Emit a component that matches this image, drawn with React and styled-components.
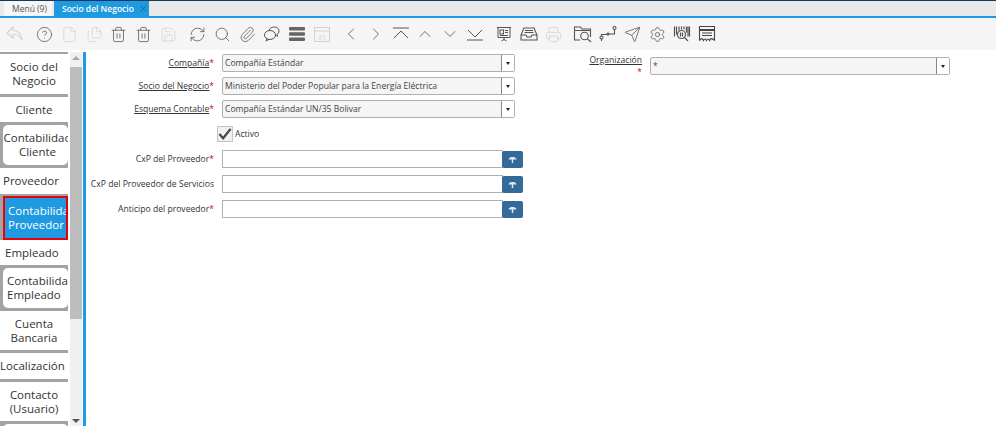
import styled, { createGlobalStyle } from "styled-components";
import {
  ChevronLeft,
  ChevronRight,
  ChevronUp,
  ChevronDown,
  CircleHelp,
  File,
  Files,
  Trash2,
  Save,
  RefreshCw,
  Search,
  Paperclip,
  Printer,
  Send,
  Settings,
  X,
} from "lucide-react";

const GlobalStyle = createGlobalStyle`
  html, body {
    margin: 0;
    height: 100%;
    overflow: hidden;
    background: #fff;
    font-family: "Open Sans", "Noto Sans", sans-serif;
  }
  * {
    box-sizing: border-box;
  }
`;

const Page = styled.div`
  width: 996px;
  height: 426px;
  display: flex;
  flex-direction: column;
  overflow: hidden;
`;

const TabBar = styled.div`
  height: 18px;
  flex: none;
  display: flex;
  align-items: flex-end;
  gap: 2px;
  padding-left: 4px;
  background: #e9e9e9;
  border-top: 1px solid #17375e;
  border-bottom: 2px solid #1f9ae0;
`;

const WindowTab = styled.div`
  height: 15px;
  display: flex;
  align-items: center;
  gap: 4px;
  padding: 0 0 0 ${(props) => (props.$active ? "8px" : "8px")};
  width: ${(props) => (props.$active ? "95px" : "48px")};
  font-size: 8.5px;
  font-weight: ${(props) => (props.$active ? 600 : 400)};
  color: ${(props) => (props.$active ? "#fff" : "#555")};
  background: ${(props) => (props.$active ? "#1f9ae0" : "#f6f6f6")};
`;

const Toolbar = styled.div`
  height: 32px;
  flex: none;
  display: flex;
  align-items: center;
  padding-left: 3px;
  gap: 4.4px;
  background: #f5f5f5;
`;

const ToolGroup = styled.div`
  display: flex;
  align-items: center;
`;

const ToolIcon = styled.span`
  width: 24.8px;
  height: 24px;
  display: flex;
  align-items: center;
  justify-content: center;
  color: ${(props) => (props.$off ? "#d2d2d2" : "#555")};
`;

const Body = styled.div`
  flex: 1;
  min-height: 0;
  display: flex;
  padding-top: 2px;
`;

const SideTabs = styled.div`
  width: 68px;
  flex: none;
  display: flex;
  flex-direction: column;
  overflow: hidden;
  background: #a3a3a3;
  padding-top: 2px;
`;

const SideTab = styled.div`
  flex: none;
  height: ${(props) => props.$h}px;
  margin-bottom: ${(props) => props.$gap ?? 3}px;
  margin-left: ${(props) => (props.$sub ? "3px" : "0")};
  padding: ${(props) => props.$pad || "0"};
  display: flex;
  align-items: center;
  justify-content: ${(props) => (props.$left ? "flex-start" : "center")};
  text-align: ${(props) => (props.$left ? "left" : "center")};
  background: ${(props) => (props.$selected ? "#1f9ae0" : "#fff")};
  color: ${(props) => (props.$selected ? "#fff" : "#333")};
  border-radius: ${(props) => (props.$sub && !props.$selected ? "5px" : "0")};
  outline: ${(props) => (props.$selected ? "2px solid #e8000d" : "none")};
  outline-offset: -2px;
  font-size: 11.5px;
  line-height: 14px;
  white-space: pre-line;
`;

const ScrollBar = styled.div`
  width: 12px;
  margin-left: 2px;
  flex: none;
  display: flex;
  flex-direction: column;
  align-items: center;
  background: #f0f0f0;
`;

const ScrollArrow = styled.div`
  width: 0;
  height: 0;
  margin: ${(props) => (props.$down ? "auto 0 3px" : "4px 0 0")};
  border-left: 4px solid transparent;
  border-right: 4px solid transparent;
  border-bottom: ${(props) => (props.$down ? "0" : "4px solid #a8a8a8")};
  border-top: ${(props) => (props.$down ? "4px solid #555" : "0")};
`;

const ScrollThumb = styled.div`
  width: 12px;
  height: 252px;
  margin-top: 7px;
  background: #bdbdbd;
`;

const Divider = styled.div`
  width: 3px;
  margin-left: 1px;
  flex: none;
  background: #1f9ae0;
`;

const Form = styled.div`
  flex: 1;
  display: flex;
  align-items: flex-start;
  padding-top: 2px;
`;

const LeftColumn = styled.div`
  width: 429px;
  flex: none;
  display: flex;
  flex-direction: column;
`;

const RightColumn = styled.div`
  width: 363px;
  margin-left: 72px;
  flex: none;
`;

const Row = styled.div`
  display: grid;
  grid-template-columns: ${(props) => props.$label || 128}px 1fr;
  column-gap: 8px;
  align-items: center;
  height: 18px;
  margin-bottom: ${(props) => props.$gap ?? 5}px;
`;

const Label = styled.label`
  display: block;
  justify-self: end;
  text-align: right;
  font-size: 8.6px;
  line-height: 12px;
  color: #333;
  text-decoration: ${(props) => (props.$link ? "underline" : "none")};
`;

const Required = styled.span`
  color: #e8000d;
  display: inline-block;
  text-decoration: none;
`;

const SelectBox = styled.div`
  height: 18px;
  display: flex;
  align-items: center;
  padding-left: 2px;
  background: #f5f5f5;
  border: 1px solid #b0b0b0;
  border-radius: 2px;
  font-size: 8.6px;
  color: #444;
  position: relative;
`;

const SelectText = styled.span`
  flex: 1;
`;

const SelectArrow = styled.span`
  width: 13px;
  height: 16px;
  display: flex;
  align-items: center;
  justify-content: center;
  background: #fff;
  border-left: 1px solid #888;
  &::after {
    content: "";
    border-left: 2.5px solid transparent;
    border-right: 2.5px solid transparent;
    border-top: 3px solid #222;
  }
`;

const CheckRow = styled.div`
  height: 16px;
  margin: 0 0 8px 131px;
  display: flex;
  align-items: center;
  gap: 2px;
  font-size: 8.6px;
  color: #333;
`;

const CheckBox = styled.span`
  width: 16px;
  height: 16px;
  display: flex;
  align-items: center;
  justify-content: center;
  background: #f0f0f0;
  border: 1px solid #c4c4c4;
`;

const SearchField = styled.div`
  height: 18px;
  display: flex;
`;

const SearchInput = styled.div`
  width: 281px;
  background: #fff;
  border: 1px solid #b0b0b0;
`;

const SearchButton = styled.span`
  width: 21px;
  height: 17px;
  margin: 1px 0 0 -1px;
  display: flex;
  align-items: center;
  justify-content: center;
  background: #336a9a;
  border-radius: 2px;
`;

const UndoIcon = () => (
  <svg width="20" height="20" viewBox="0 0 20 20" fill="none" stroke="currentColor" strokeWidth="1.1">
    <path d="M8 3 2 9l6 5v-3.5c4-.4 7 .8 9 6 0-6-3-9.5-9-10.5z" />
  </svg>
);

const ChatIcon = () => (
  <svg width="18" height="18" viewBox="0 0 18 18" fill="none" stroke="currentColor" strokeWidth="1">
    <ellipse cx="7" cy="10" rx="5.5" ry="4.5" />
    <path d="M6 5c1-2 3-3 5.500-3 2.500 0 4.500 1.800 4.500 4 0 1.500-.8 2.600-2 3.300l.6 2-2.500-1.300" />
    <path d="M4 13.500 3 16l3-1.700" />
  </svg>
);

const RowsIcon = () => (
  <svg width="18" height="18" viewBox="0 0 18 18" fill="#666">
    <rect x="1" y="2" width="16" height="3.500" rx="1" />
    <rect x="1" y="7.200" width="16" height="3.500" rx="1" />
    <rect x="1" y="12.400" width="16" height="3.500" rx="1" />
  </svg>
);

const CalendarIcon = () => (
  <svg width="18" height="18" viewBox="0 0 18 18" fill="none" stroke="currentColor">
    <rect x="1.500" y="2.500" width="15" height="14" />
    <path d="M1.500 6h15" />
    <text x="9" y="14.500" fontSize="7" textAnchor="middle" fill="currentColor" stroke="none">31</text>
  </svg>
);

const FirstIcon = () => (
  <svg width="20" height="18" viewBox="0 0 20 18" fill="none" stroke="currentColor" strokeWidth="1">
    <path d="M2 3h16M3 13l7-7 7 7" />
  </svg>
);

const LastIcon = () => (
  <svg width="20" height="18" viewBox="0 0 20 18" fill="none" stroke="currentColor" strokeWidth="1">
    <path d="M2 15h16M3 5l7 7 7-7" />
  </svg>
);

const BoardIcon = () => (
  <svg width="18" height="18" viewBox="0 0 18 18" fill="none" stroke="#555">
    <path d="M2 2.500h14M3 2.500v10h12v-10M9 12.500V15M6.500 16 9 14.500 11.500 16" />
    <rect x="5" y="5" width="3.500" height="4" />
    <path d="M10 5.500h3M10 7.500h3M5 10.500h8" />
  </svg>
);

const InboxIcon = () => (
  <svg width="18" height="18" viewBox="0 0 18 18" fill="none" stroke="#555" strokeWidth="1.100">
    <path d="M4 3h10l3 7v5H1v-5zM1 10h5l1 2h4l1-2h5M5 5.500h8M4.500 7.500h9" />
  </svg>
);

const FolderIcon = () => (
  <svg width="20" height="18" viewBox="0 0 20 18" fill="none" stroke="#555" strokeWidth="1.100">
    <path d="M7 15H1.500V2h6l1.500 2h8.500v8M2 5.500h15" />
    <circle cx="11.500" cy="11" r="3.800" />
    <path d="m14.500 14 3.500 3" />
  </svg>
);

const RouteIcon = () => (
  <svg width="18" height="18" viewBox="0 0 18 18" fill="none" stroke="#555" strokeWidth="1.100">
    <circle cx="2.500" cy="12.500" r="1.500" />
    <circle cx="9" cy="9" r="1" fill="#555" />
    <circle cx="15.500" cy="3" r="1.500" />
    <path d="M2.500 11V9.500h5.500M10 9h5.500V4.500M2.500 14v2" />
  </svg>
);

const BarcodeIcon = () => (
  <svg width="18" height="18" viewBox="0 0 18 18" fill="none" stroke="#555" strokeWidth="1.200">
    <path d="M1.500 1.500v10M3.500 1.500v8M6 1.500v4M8.500 1.500v3M11 1.500v3M13.500 1.500v6M15 1.500v10M16.500 1.500v10" />
    <circle cx="8.500" cy="9.500" r="4" />
    <path d="m11.500 12.500 3.500 3.500M7.500 7.500v4M9.500 7.500v4" />
  </svg>
);

const ReceiptIcon = () => (
  <svg width="18" height="18" viewBox="0 0 18 18" fill="none" stroke="#444" strokeWidth="1.100">
    <path d="M1.500 15.500V1.500h15v14" />
    <path d="M1 5h16" strokeWidth="2" />
    <path d="M4 8h10M4 10.500h10M1.500 15.500c2-2.500 3-2.500 4 0 1-2 2-2 3 0 1-2 2-2 3 0 1-2.500 3-2.500 5 0" />
  </svg>
);

const LookupIcon = () => (
  <svg width="9" height="8" viewBox="0 0 9 8" fill="#dfe8f0">
    <path d="M0.500 3.500C1 1.500 2.800 1 4.500 1s3.500.5 4 2.500H5.200V7H3.800V3.500z" />
  </svg>
);

const CheckIcon = () => (
  <svg width="15" height="14" viewBox="0 0 15 14" fill="none" stroke="#444" strokeWidth="2.400">
    <path d="M1.500 7 5.500 11.500 13.500 1.500" />
  </svg>
);

const lucide = { size: 17, strokeWidth: 1.1 };

const toolGroups = [
  [{ icon: <UndoIcon />, off: true }],
  [
    { icon: <CircleHelp {...lucide} /> },
    { icon: <File {...lucide} />, off: true },
    { icon: <Files {...lucide} />, off: true },
    { icon: <Trash2 {...lucide} /> },
    { icon: <Trash2 {...lucide} /> },
    { icon: <Save {...lucide} />, off: true },
  ],
  [
    { icon: <RefreshCw {...lucide} /> },
    { icon: <Search {...lucide} /> },
    { icon: <Paperclip {...lucide} /> },
    { icon: <ChatIcon /> },
    { icon: <RowsIcon /> },
    { icon: <CalendarIcon />, off: true },
  ],
  [
    { icon: <ChevronLeft size={20} strokeWidth={1} /> },
    { icon: <ChevronRight size={20} strokeWidth={1} /> },
    { icon: <FirstIcon /> },
    { icon: <ChevronUp size={20} strokeWidth={1} /> },
    { icon: <ChevronDown size={20} strokeWidth={1} /> },
    { icon: <LastIcon /> },
  ],
  [
    { icon: <BoardIcon /> },
    { icon: <InboxIcon /> },
    { icon: <Printer {...lucide} />, off: true },
  ],
  [
    { icon: <FolderIcon /> },
    { icon: <RouteIcon /> },
    { icon: <Send {...lucide} /> },
    { icon: <Settings {...lucide} /> },
    { icon: <BarcodeIcon /> },
    { icon: <ReceiptIcon /> },
  ],
];

const sideTabs = [
  { text: "Socio del\nNegocio", h: 40 },
  { text: "Cliente", h: 25 },
  { text: "Contabilidad\nCliente", h: 40, sub: true, pad: "0 0 0 4px" },
  { text: "Proveedor", h: 26, left: true, pad: "0 0 0 3px", gap: 2 },
  { text: "Contabilidad\nProveedor", h: 44, sub: true, selected: true, left: true, pad: "0 0 0 5px", gap: 0 },
  { text: "Empleado", h: 25, left: true, pad: "0 0 0 5px" },
  { text: "Contabilidad\nEmpleado", h: 40, sub: true, left: true, pad: "0 0 0 4px" },
  { text: "Cuenta\nBancaria", h: 39 },
  { text: "Localización", h: 26, left: true },
  { text: "Contacto\n(Usuario)", h: 39 },
  { text: "", h: 30, sub: true },
];

const SelectField = ({ children }) => (
  <SelectBox>
    <SelectText>{children}</SelectText>
    <SelectArrow />
  </SelectBox>
);

const Lookup = () => (
  <SearchField>
    <SearchInput />
    <SearchButton>
      <LookupIcon />
    </SearchButton>
  </SearchField>
);

export default function App() {
  return (
    <Page>
      <GlobalStyle />
      <TabBar>
        <WindowTab>Menú (9)</WindowTab>
        <WindowTab $active>
          Socio del Negocio
          <X size={11} strokeWidth={1} color="#17375e" />
        </WindowTab>
      </TabBar>
      <Toolbar>
        {toolGroups.map((group, i) => (
          <ToolGroup key={i}>
            {group.map((tool, j) => (
              <ToolIcon key={j} $off={tool.off}>
                {tool.icon}
              </ToolIcon>
            ))}
          </ToolGroup>
        ))}
      </Toolbar>
      <Body>
        <SideTabs>
          {sideTabs.map((tab, i) => (
            <SideTab
              key={i}
              $h={tab.h}
              $sub={tab.sub}
              $left={tab.left}
              $pad={tab.pad}
              $gap={tab.gap}
              $selected={tab.selected}
            >
              {tab.text}
            </SideTab>
          ))}
        </SideTabs>
        <ScrollBar>
          <ScrollArrow />
          <ScrollThumb />
          <ScrollArrow $down />
        </ScrollBar>
        <Divider />
        <Form>
          <LeftColumn>
            <Row>
              <Label $link>
                Compañía<Required>*</Required>
              </Label>
              <SelectField>Compañía Estándar</SelectField>
            </Row>
            <Row>
              <Label $link>
                Socio del Negocio<Required>*</Required>
              </Label>
              <SelectField>Ministerio del Poder Popular para la Energía Eléctrica</SelectField>
            </Row>
            <Row $gap={8}>
              <Label $link>
                Esquema Contable<Required>*</Required>
              </Label>
              <SelectField>Compañía Estándar UN/35 Bolivar</SelectField>
            </Row>
            <CheckRow>
              <CheckBox>
                <CheckIcon />
              </CheckBox>
              Activo
            </CheckRow>
            <Row $gap={7}>
              <Label>
                CxP del Proveedor<Required>*</Required>
              </Label>
              <Lookup />
            </Row>
            <Row $gap={7}>
              <Label>CxP del Proveedor de Servicios</Label>
              <Lookup />
            </Row>
            <Row>
              <Label>
                Anticipo del proveedor<Required>*</Required>
              </Label>
              <Lookup />
            </Row>
          </LeftColumn>
          <RightColumn>
            <Row $label={55}>
              <Label $link>
                Organización<Required>*</Required>
              </Label>
              <SelectField>*</SelectField>
            </Row>
          </RightColumn>
        </Form>
      </Body>
    </Page>
  );
}
